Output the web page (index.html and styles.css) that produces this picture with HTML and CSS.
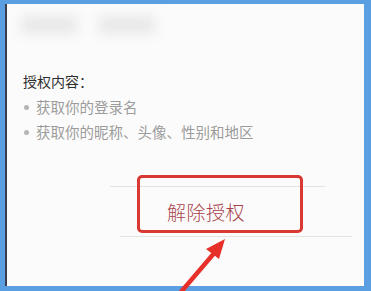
FILE: index.html
```html
<!DOCTYPE html>
<html lang="zh-CN">

<head>
    <meta charset="UTF-8">
    <meta name="viewport" content="width=device-width, initial-scale=1.0">
    <title>授权管理</title>
    <link rel="stylesheet" href="styles.css">
</head>

<body>
    <div id="page">
        <div id="frame">
            <div id="screen">
                <div class="blurHead">
                    <span class="blob"></span>
                    <span class="blob"></span>
                </div>

                <div class="scope">
                    <div class="scopeTitle">授权内容：</div>
                    <ul class="scopeList">
                        <li>获取你的登录名</li>
                        <li>获取你的昵称、头像、性别和地区</li>
                    </ul>
                </div>

                <div class="revokeRow">
                    <div class="revokeBtn">解除授权</div>
                </div>
            </div>
        </div>

        <!-- annotation on top of the screenshot -->
        <div class="markBox"></div>
        <svg class="markArrow" width="371" height="291" viewBox="0 0 371 291">
            <line x1="181" y1="292" x2="216" y2="251" stroke="#e8302a" stroke-width="4.5" stroke-linecap="round" />
            <polygon points="225,239 206,249 219,259" fill="#e8302a" />
        </svg>
    </div>
</body>

</html>
```

FILE: styles.css
```css
* {
    box-sizing: border-box;
}

body {
    margin: 0;
    font-family: "Noto Sans CJK SC", "Noto Sans", sans-serif;
    background-color: #5b9fe3;
}

#page {
    position: relative;
    width: 371px;
    height: 291px;
    overflow: hidden;
}

#frame {
    width: 371px;
    height: 291px;
    border-top: 4px solid #5b9fe3;
    border-left: 5px solid #5b9fe3;
    border-right: 7px solid #5b9fe3;
    border-bottom: 5px solid #5b9fe3;
}

#screen {
    height: 100%;
    border-left: 2px solid #3b3f4c;
    background-color: #fcfbfb;
    padding-top: 9px;
}

/*----- blurred nickname area at the top -----*/
.blurHead {
    display: flex;
    gap: 22px;
    padding-left: 14px;
    height: 24px;
}

.blob {
    width: 56px;
    height: 18px;
    margin-top: 3px;
    background-color: #e8e8e8;
    filter: blur(6px);
}

.scope {
    padding-left: 16px;
    margin-top: 34px;
}

.scopeTitle {
    font-size: 14px;
    line-height: 20px;
    color: #2e2e2e;
}

.scopeList {
    list-style: none;
    margin: 3px 0 0;
    padding: 0;
}

.scopeList li {
    position: relative;
    font-size: 14.5px;
    line-height: 25px;
    color: #9b9b9b;
    padding-left: 13px;
}

.scopeList li::before {
    content: "";
    position: absolute;
    left: 1px;
    top: 11px;
    width: 5px;
    height: 5px;
    border-radius: 50%;
    background-color: #b5b5b5;
}

.revokeRow {
    margin-top: 42px;
    padding-left: 103px;
}

.revokeBtn {
    position: relative;
    width: 245px;
    height: 51px;
    display: flex;
    align-items: center;
    padding-left: 57px;
    font-size: 19px;
    font-weight: 300;
    color: #a8434b;
    letter-spacing: 0.5px;
}

/*----- the two divider lines are not the same length -----*/
.revokeBtn::before,
.revokeBtn::after {
    content: "";
    position: absolute;
    height: 1px;
    background-color: #e4e4e4;
}

.revokeBtn::before {
    top: 0;
    left: 0;
    width: 215px;
}

.revokeBtn::after {
    bottom: 0;
    left: 10px;
    width: 232px;
}

.markBox {
    position: absolute;
    left: 137px;
    top: 175px;
    width: 166px;
    height: 58px;
    border: 3px solid #d83a33;
    border-radius: 5px;
}

.markArrow {
    position: absolute;
    left: 0;
    top: 0;
}
```
